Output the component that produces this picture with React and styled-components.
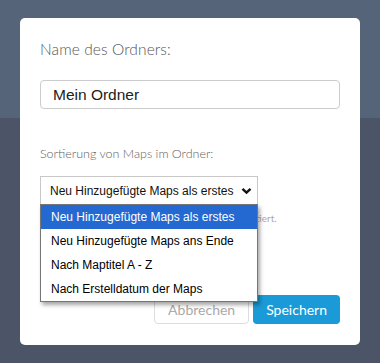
import React, { useState } from "react";
import styled, { createGlobalStyle } from "styled-components";

const options = [
  "Neu Hinzugefügte Maps als erstes",
  "Neu Hinzugefügte Maps ans Ende",
  "Nach Maptitel A - Z",
  "Nach Erstelldatum der Maps",
];

const App = () => {
  const [folderName, setFolderName] = useState("Mein Ordner");
  const [sorting, setSorting] = useState(options[0]);

  return (
    <Page>
      <GlobalStyle />
      <Header />
      <Body />
      <Modal>
        <Label>Name des Ordners:</Label>
        <NameInput
          value={folderName}
          onChange={(e) => setFolderName(e.target.value)}
        />
        <SubLabel>Sortierung von Maps im Ordner:</SubLabel>
        <SelectWrapper>
          <SelectBox>
            <span>{sorting}</span>
            <svg width="11" height="8" viewBox="0 0 11 8">
              <polyline
                points="1.5,1.8 5.5,5.6 9.5,1.8"
                fill="none"
                stroke="#111"
                strokeWidth="2.4"
              />
            </svg>
          </SelectBox>
          <OptionList>
            {options.map((option) => (
              <OptionItem
                key={option}
                selected={option === sorting}
                onClick={() => setSorting(option)}
              >
                {option}
              </OptionItem>
            ))}
          </OptionList>
        </SelectWrapper>
        <Hint>Bestehende Maps im Ordner werden nun neu sortiert.</Hint>
        <Footer>
          <CancelButton>Abbrechen</CancelButton>
          <SaveButton>Speichern</SaveButton>
        </Footer>
      </Modal>
    </Page>
  );
};

export default App;

// style
const GlobalStyle = createGlobalStyle`
  body {
    margin: 0;
    font-family: Lato, "Open Sans", sans-serif;
  }
`;

const Page = styled.div`
  position: relative;
  width: 380px;
  height: 363px;
  display: flex;
  flex-direction: column;
  overflow: hidden;
`;

const Header = styled.div`
  height: 118px;
  background-color: #56647a;
`;

const Body = styled.div`
  flex: 1;
  background-color: #4b5567;
`;

const Modal = styled.div`
  position: absolute;
  top: 18px;
  left: 20px;
  width: 340px;
  height: 327px;
  box-sizing: border-box;
  background-color: #ffffff;
  border-radius: 5px;
  padding: 21px 20px 21px 20px;
  display: flex;
  flex-direction: column;
`;

const Label = styled.div`
  font-size: 15.5px;
  font-weight: 300;
  line-height: 20px;
  color: #555555;
  letter-spacing: 0.1px;
`;

const NameInput = styled.input`
  margin-top: 21px;
  height: 29px;
  box-sizing: border-box;
  border: 1px solid #cccccc;
  border-radius: 4px;
  padding: 0 12px;
  font-family: "Liberation Sans", Arial, sans-serif;
  font-size: 15.5px;
  color: #222222;
  outline: none;
`;

const SubLabel = styled.div`
  margin-top: 37px;
  font-size: 12.5px;
  font-weight: 300;
  line-height: 16px;
  color: #5e5e5e;
`;

const SelectWrapper = styled.div`
  position: relative;
  margin-top: 14px;
  width: 218px;
`;

const SelectBox = styled.div`
  height: 28px;
  box-sizing: border-box;
  border: 1px solid #c8c8c8;
  border-bottom: none;
  padding: 0 5px 0 9px;
  display: flex;
  align-items: center;
  justify-content: space-between;
  font-family: "Liberation Sans", Arial, sans-serif;
  font-size: 12px;
  color: #111111;
  background-color: #ffffff;
`;

const OptionList = styled.ul`
  position: absolute;
  top: 28px;
  left: 0;
  width: 218px;
  box-sizing: border-box;
  margin: 0;
  padding: 0;
  list-style: none;
  background-color: #ffffff;
  border: 1px solid #767676;
  box-shadow: 2px 3px 4px rgba(0, 0, 0, 0.35);
  z-index: 2;
`;

const OptionItem = styled.li`
  height: 24px;
  line-height: 24px;
  padding-left: 10px;
  font-family: "Liberation Sans", Arial, sans-serif;
  font-size: 12px;
  color: ${(props) => (props.selected ? "#ffffff" : "#000000")};
  background-color: ${(props) => (props.selected ? "#2468d2" : "#ffffff")};
`;

const Hint = styled.div`
  margin-top: 7px;
  font-size: 10px;
  line-height: 14px;
  color: #aaaaaa;
`;

const Footer = styled.div`
  margin-top: auto;
  display: flex;
  justify-content: flex-end;
  gap: 4px;
`;

const CancelButton = styled.button`
  height: 29px;
  padding: 0 13px;
  border: 1px solid #dddddd;
  border-radius: 4px;
  background-color: #ffffff;
  color: #aaaaaa;
  font-family: Lato, "Open Sans", sans-serif;
  font-size: 14px;
`;

const SaveButton = styled.button`
  height: 29px;
  padding: 0 13px;
  border: none;
  border-radius: 4px;
  background-color: #1a9bd7;
  color: #ffffff;
  font-family: Lato, "Open Sans", sans-serif;
  font-size: 14px;
`;
